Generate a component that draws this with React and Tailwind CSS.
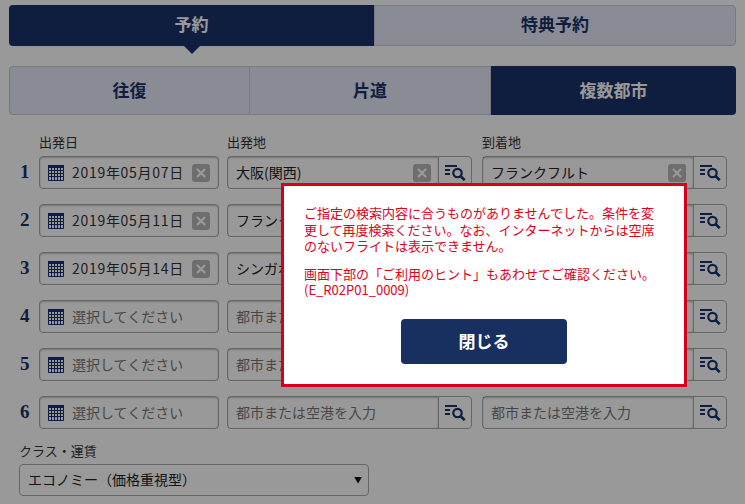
const rows = [
  { no: 1, date: "2019年05月07日", from: "大阪(関西)", to: "フランクフルト" },
  { no: 2, date: "2019年05月11日", from: "フランクフルト", to: "シンガポール" },
  { no: 3, date: "2019年05月14日", from: "シンガポール", to: "大阪(関西)" },
  { no: 4 },
  { no: 5 },
  { no: 6 },
];

const CalendarIcon = () => (
  <svg width="16" height="16" viewBox="0 0 16 16" className="shrink-0 text-[#1a3369]">
    <rect x="0" y="0" width="16" height="3" fill="currentColor" />
    <path
      d="M.5 2.5v13h15v-13M.5 5.5h15M.5 8.5h15M.5 11.5h15M3.5 3v12M6.5 3v12M9.5 3v12M12.5 3v12"
      fill="none"
      stroke="currentColor"
    />
  </svg>
);

const ClearButton = () => (
  <span className="flex h-[18px] w-[18px] shrink-0 items-center justify-center rounded-[3px] bg-[#b8b8b8]">
    <svg width="10" height="10" viewBox="0 0 10 10">
      <path d="M1 1l8 8M9 1l-8 8" stroke="#fff" strokeWidth="2.2" />
    </svg>
  </span>
);

const SearchListIcon = () => (
  <svg width="21" height="16" viewBox="0 0 21 16" className="text-[#1a3369]">
    <path d="M0 1h12M0 5h5M0 9h5" stroke="currentColor" strokeWidth="2" fill="none" />
    <circle cx="12.5" cy="8" r="4.2" stroke="currentColor" strokeWidth="2.2" fill="none" />
    <path d="M15.5 11l4.2 4.2" stroke="currentColor" strokeWidth="2.6" fill="none" />
  </svg>
);

const CityField = ({ value, width }) => (
  <div className={`flex h-[33px] rounded border border-[#aaa] ${width}`}>
    <div className="flex min-w-0 flex-1 items-center justify-between overflow-hidden border-r border-[#aaa] pl-2 pr-[7px] shadow-[inset_0_1px_2px_rgba(0,0,0,0.25)]">
      {value ? (
        <>
          <span className="truncate pb-[2px] text-sm text-[#222]">{value}</span>
          <ClearButton />
        </>
      ) : (
        <span className="truncate pb-[2px] text-sm text-[#777]">都市または空港を入力</span>
      )}
    </div>
    <div className="flex w-8 shrink-0 items-center justify-center">
      <SearchListIcon />
    </div>
  </div>
);

const Row = ({ row }) => (
  <div className="flex items-center">
    <div className="w-[39px] pl-[20px] font-['Liberation_Serif',serif] text-[19px] font-bold text-[#1a3369]">
      {row.no}
    </div>
    <div className="mr-2 flex h-[33px] w-[180px] items-center rounded border border-[#aaa] pl-2 pr-[2px] shadow-[inset_0_1px_2px_rgba(0,0,0,0.25)]">
      <CalendarIcon />
      {row.date ? (
        <>
          <span className="ml-2 flex-1 whitespace-nowrap pb-[2px] text-sm tracking-[0.7px] text-[#333]">{row.date}</span>
          <span className="mr-[6px]">
            <ClearButton />
          </span>
        </>
      ) : (
        <span className="ml-2 pb-[2px] text-sm text-[#777]">選択してください</span>
      )}
    </div>
    <CityField value={row.from} width="w-[245px] mr-[10px]" />
    <CityField value={row.to} width="w-[245px]" />
  </div>
);

export default function App() {
  return (
    <div className="relative h-[504px] w-[745px] overflow-hidden bg-white font-['Noto_Sans_CJK_JP',sans-serif] text-[#222]">
      <div className="px-[9px] pt-[5px]">
        <div className="flex h-[41px] w-[727px] text-[17px] font-bold">
          <div className="relative flex w-[365px] items-center justify-center rounded-l bg-[#1a3369] pb-[3px] text-white">
            予約
            <span className="absolute left-1/2 top-full h-0 w-0 -translate-x-1/2 border-x-[8px] border-t-[8px] border-x-transparent border-t-[#1a3369]" />
          </div>
          <div className="flex flex-1 items-center justify-center rounded-r border border-[#c6cbe0] bg-[#e4e8f8] pb-[3px] text-[#1a3369]">
            特典予約
          </div>
        </div>

        <div className="mt-5 flex h-[49px] w-[727px] text-[17px] font-bold">
          <div className="flex w-[241px] items-center justify-center rounded-l border border-[#c6cbe0] bg-[#e4e8f8] pb-[2px] text-[#1a3369]">
            往復
          </div>
          <div className="flex w-[241px] items-center justify-center border-y border-r border-[#c6cbe0] bg-[#e4e8f8] pb-[2px] text-[#1a3369]">
            片道
          </div>
          <div className="flex flex-1 items-center justify-center rounded-r bg-[#1a3369] pb-[2px] text-white">
            複数都市
          </div>
        </div>
      </div>

      <div className="mt-[18px] flex h-[23px] items-start text-[13px] leading-[18px] text-[#333]">
        <span className="ml-[39px] w-[188px]">出発日</span>
        <span className="w-[255px]">出発地</span>
        <span>到着地</span>
      </div>

      <div className="flex flex-col gap-[15px]">
        {rows.map((row) => (
          <Row key={row.no} row={row} />
        ))}
      </div>

      <div className="ml-[19px] mt-[12px] w-[350px]">
        <div className="mb-[3px] text-[13px] leading-[20px] text-[#333]">クラス・運賃</div>
        <div className="flex h-8 items-center justify-between rounded border border-[#aaa] pl-2 pr-[6px] text-sm">
          <span className="pb-[2px]">エコノミー（価格重視型）</span>
          <span className="text-[8px] text-black">▼</span>
        </div>
      </div>

      {/* dim layer + error dialog */}
      <div className="absolute inset-0 bg-black/40" />
      <div className="absolute left-[281px] top-[183px] h-[204px] w-[406px] border-[3px] border-[#d7001b] bg-white px-5 pt-[19px] text-[13px] leading-[16.5px] text-[#e0001b]">
        <p className="whitespace-nowrap">
          ご指定の検索内容に合うものがありませんでした。条件を変
          <br />
          更して再度検索ください。なお、インターネットからは空席
          <br />
          のないフライトは表示できません。
        </p>
        <p className="mt-[11px] whitespace-nowrap">
          画面下部の「ご利用のヒント」もあわせてご確認ください。
          <br />
          (E_R02P01_0009)
        </p>
        <button className="mx-auto mt-5 flex h-[45px] w-[166px] items-center justify-center rounded bg-[#17305f] text-[17px] font-bold text-white">
          閉じる
        </button>
      </div>
    </div>
  );
}
